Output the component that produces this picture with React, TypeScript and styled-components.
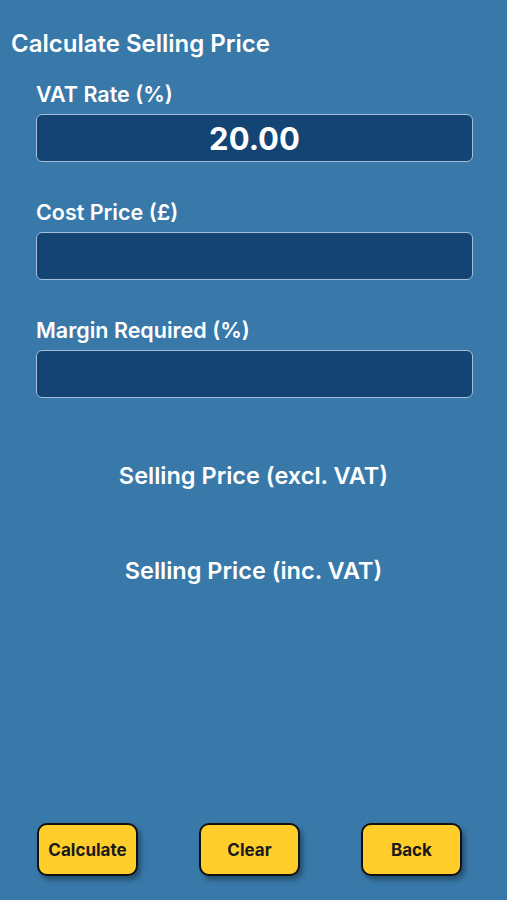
import React, { useState } from 'react';
import styled, { createGlobalStyle } from 'styled-components';

const GlobalStyle = createGlobalStyle`
  html, body {
    margin: 0;
    padding: 0;
    background: #3879aa;
  }
  body {
    font-family: Inter, "Noto Sans", "Liberation Sans", sans-serif;
  }
  * {
    box-sizing: border-box;
  }
`;

const Screen = styled.div`
  min-height: 100vh;
  display: flex;
  flex-direction: column;
  background: #3879aa;
  color: #ffffff;
  padding: 30px 0 24px;
`;

const Title = styled.h1`
  margin: 0 0 24px 11px;
  font-size: 24px;
  line-height: 28px;
  font-weight: 600;
`;

const Form = styled.div`
  display: flex;
  flex-direction: column;
  gap: 38px;
  padding: 0 34px 0 36px;
`;

const Field = styled.label`
  display: flex;
  flex-direction: column;
  gap: 7px;
`;

const FieldLabel = styled.span`
  font-size: 21.5px;
  line-height: 25px;
  font-weight: 600;
`;

const Input = styled.input`
  width: 100%;
  height: 48px;
  border: 1px solid #a3c0db;
  border-radius: 6px;
  background: #134474;
  color: #ffffff;
  font-family: inherit;
  font-size: 31px;
  font-weight: 700;
  text-align: center;
  outline: none;
  padding: 0 8px;
`;

const Results = styled.div`
  display: flex;
  flex-direction: column;
  align-items: center;
  gap: 67px;
  margin-top: 64px;
`;

const ResultLine = styled.div`
  font-size: 23.5px;
  line-height: 28px;
  font-weight: 600;
  text-align: center;
`;

const Spacer = styled.div`
  flex: 1;
`;

const ButtonRow = styled.div`
  display: flex;
  gap: 61px;
  padding-left: 37px;
`;

const Button = styled.button`
  width: 101px;
  height: 53px;
  border: 2px solid #111111;
  border-radius: 10px;
  background: #ffce2a;
  color: #1a1a1a;
  font-family: inherit;
  font-size: 17px;
  font-weight: 700;
  box-shadow: 3px 4px 5px rgba(0, 0, 0, 0.35);
  cursor: pointer;
`;

const App = (): JSX.Element => {
  const [vat, setVat] = useState('20.00');
  const [cost, setCost] = useState('');
  const [margin, setMargin] = useState('');

  const clear = () => {
    setCost('');
    setMargin('');
  };

  return (
    <>
      <GlobalStyle />
      <Screen>
        <Title>Calculate Selling Price</Title>
        <Form>
          <Field>
            <FieldLabel>VAT Rate (%)</FieldLabel>
            <Input value={vat} onChange={(e) => setVat(e.target.value)} />
          </Field>
          <Field>
            <FieldLabel>Cost Price (£)</FieldLabel>
            <Input value={cost} onChange={(e) => setCost(e.target.value)} />
          </Field>
          <Field>
            <FieldLabel>Margin Required (%)</FieldLabel>
            <Input value={margin} onChange={(e) => setMargin(e.target.value)} />
          </Field>
        </Form>
        <Results>
          <ResultLine>Selling Price (excl. VAT)</ResultLine>
          <ResultLine>Selling Price (inc. VAT)</ResultLine>
        </Results>
        <Spacer />
        <ButtonRow>
          <Button>Calculate</Button>
          <Button onClick={clear}>Clear</Button>
          <Button>Back</Button>
        </ButtonRow>
      </Screen>
    </>
  );
};

export default App;
